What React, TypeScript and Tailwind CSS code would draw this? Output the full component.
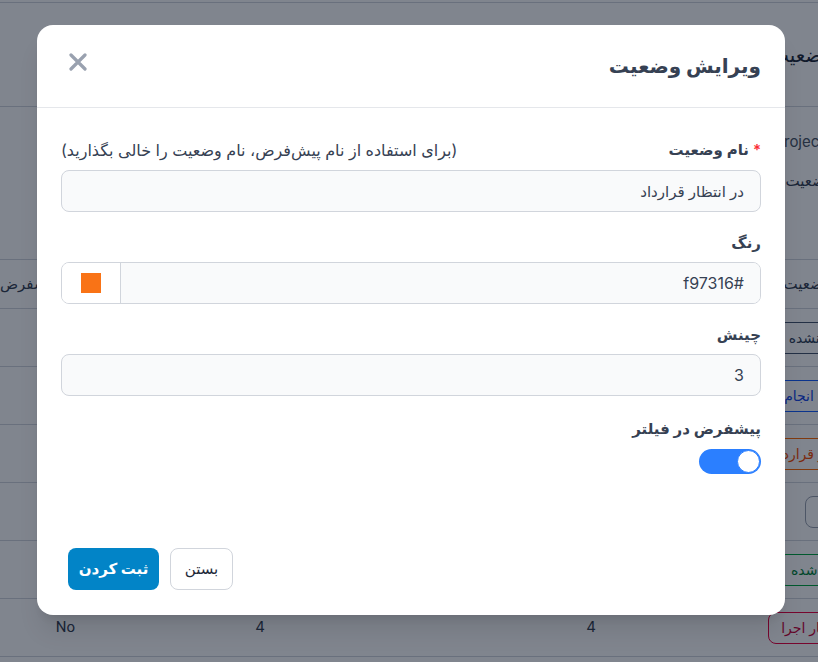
import { useState } from 'react';

type StatusRow = {
  label: string;
  badge: string;
  order: number;
};

const rows: StatusRow[] = [
  { label: 'انجام نشده', badge: 'border-slate-600 text-slate-700', order: 1 },
  { label: 'در حال انجام', badge: 'border-blue-600 text-blue-700', order: 2 },
  { label: 'در انتظار قرارداد', badge: 'border-orange-500 text-orange-600', order: 3 },
  { label: '-', badge: 'border-gray-400 text-gray-500', order: 4 },
  { label: 'انجام شده', badge: 'border-green-600 text-green-700', order: 4 },
  { label: 'در انتظار اجرا', badge: 'border-rose-600 text-rose-700', order: 4 },
];

function BackgroundPage() {
  return (
    <div dir="rtl" className="w-[940px] -mr-[122px] bg-white text-gray-700">
      <div className="h-[3px] border-b border-gray-300" />
      <div className="h-[104px] border-b border-gray-300 flex items-center pr-[108px]">
        <h1 className="text-[20px] text-gray-800">وضعیت‌های سفارش</h1>
      </div>
      <div className="pr-[108px] pt-6 h-[152px]">
        <p className="text-[15px] text-gray-600 text-right" dir="ltr">
          projects
        </p>
        <p className="text-[15px] mt-4 text-gray-700">وضعیت</p>
      </div>
      <div className="flex h-[50px] border-y border-gray-300 items-center text-[15px] text-gray-700">
        <div className="w-[190px] pr-[110px] text-right">وضعیت</div>
        <div className="w-[318px] text-center">ترتیب</div>
        <div className="w-[344px] text-center">چینش</div>
        <div className="w-[88px] text-right pr-[32px]">پیشفرض</div>
      </div>
      {rows.map((row) => (
        <div key={row.label} className="flex h-[58px] border-b border-gray-300 items-center text-[15px] text-gray-700">
          <div className="w-[190px] flex justify-center pr-[48px]">
            <span className={`h-[32px] flex items-center rounded-lg border px-3 text-[14px] whitespace-nowrap ${row.badge}`}>
              {row.label}
            </span>
          </div>
          <div className="w-[318px] text-center">{row.order}</div>
          <div className="w-[344px] text-center">{row.order}</div>
          <div className="w-[88px] text-right pr-[13px] font-['Roboto',sans-serif]">No</div>
        </div>
      ))}
    </div>
  );
}

function Toggle({ on, onChange }: { on: boolean; onChange: (v: boolean) => void }) {
  return (
    <button
      type="button"
      onClick={() => onChange(!on)}
      className={`w-[62px] h-[25px] rounded-full flex items-center p-px ${on ? 'bg-blue-500 justify-start' : 'bg-gray-300 justify-end'}`}
    >
      <span className="w-[23px] h-[23px] rounded-full bg-white border border-blue-500" />
    </button>
  );
}

export default function App() {
  const [name, setName] = useState('در انتظار قرارداد');
  const [color, setColor] = useState('#f97316');
  const [order, setOrder] = useState('3');
  const [isDefault, setIsDefault] = useState(true);

  return (
    <div className="relative h-[662px] w-full overflow-hidden font-['Inter','DejaVu_Sans',sans-serif]">
      <BackgroundPage />

      <div className="absolute inset-0 bg-[#020b1d]/50" />

      <div className="absolute inset-0 flex justify-center pt-[25px] pl-[4px]">
        <div dir="rtl" className="w-[748px] h-[590px] bg-white rounded-2xl flex flex-col shadow-xl">
          <div className="h-[83px] flex items-center justify-between px-6 border-b border-gray-200">
            <h2 className="text-[20px] font-bold text-gray-700">ویرایش وضعیت</h2>
            <button type="button" className="p-2 -mt-2 text-gray-400">
              <svg width="18" height="18" viewBox="0 0 18 18" fill="none" stroke="currentColor" strokeWidth="3.2" strokeLinecap="round">
                <path d="M2 2L16 16M16 2L2 16" />
              </svg>
            </button>
          </div>

          <div className="flex-1 px-6 pt-8">
            <div className="mb-5">
              <div className="flex items-center justify-between h-5">
                <label className="text-[15px] font-semibold text-gray-700">
                  <span className="text-red-500 ml-1">*</span>
                  نام وضعیت
                </label>
                <span className="text-[16px] text-gray-700">(برای استفاده از نام پیش‌فرض، نام وضعیت را خالی بگذارید)</span>
              </div>
              <input
                value={name}
                onChange={(e) => setName(e.target.value)}
                className="mt-[10px] w-full h-[42px] rounded-lg border border-gray-300 bg-gray-50 px-4 text-[15px] text-gray-700 outline-none"
              />
            </div>

            <div className="mb-5">
              <label className="block h-5 text-[15px] font-semibold text-gray-700">رنگ</label>
              <div className="mt-[10px] flex h-[42px] rounded-lg border border-gray-300 overflow-hidden">
                <input
                  value={color}
                  onChange={(e) => setColor(e.target.value)}
                  className="flex-1 bg-gray-50 px-4 text-[16px] text-gray-700 outline-none"
                />
                <div className="w-[59px] bg-white border-r border-gray-300 flex items-center justify-center">
                  <span className="w-5 h-5 bg-[#f97316]" style={{ backgroundColor: color }} />
                </div>
              </div>
            </div>

            <div className="mb-5">
              <label className="block h-5 text-[15px] font-semibold text-gray-700">چینش</label>
              <input
                value={order}
                onChange={(e) => setOrder(e.target.value)}
                className="mt-[10px] w-full h-[42px] rounded-lg border border-gray-300 bg-gray-50 px-4 text-[16px] text-gray-700 outline-none"
              />
            </div>

            <div className="pt-[2px]">
              <label className="block h-5 text-[15px] font-semibold text-gray-700">پیشفرض در فیلتر</label>
              <div className="mt-[11px] flex">
                <Toggle on={isDefault} onChange={setIsDefault} />
              </div>
            </div>
          </div>

          <div className="flex justify-end gap-[11px] px-[31px] pb-[25px]">
            <button type="button" className="h-[42px] w-[63px] rounded-lg border border-gray-300 bg-white text-[15px] text-gray-800">
              بستن
            </button>
            <button type="button" className="h-[42px] w-[91px] rounded-lg bg-[#0284c7] text-[15px] font-bold text-white">
              ثبت کردن
            </button>
          </div>
        </div>
      </div>
    </div>
  );
}
